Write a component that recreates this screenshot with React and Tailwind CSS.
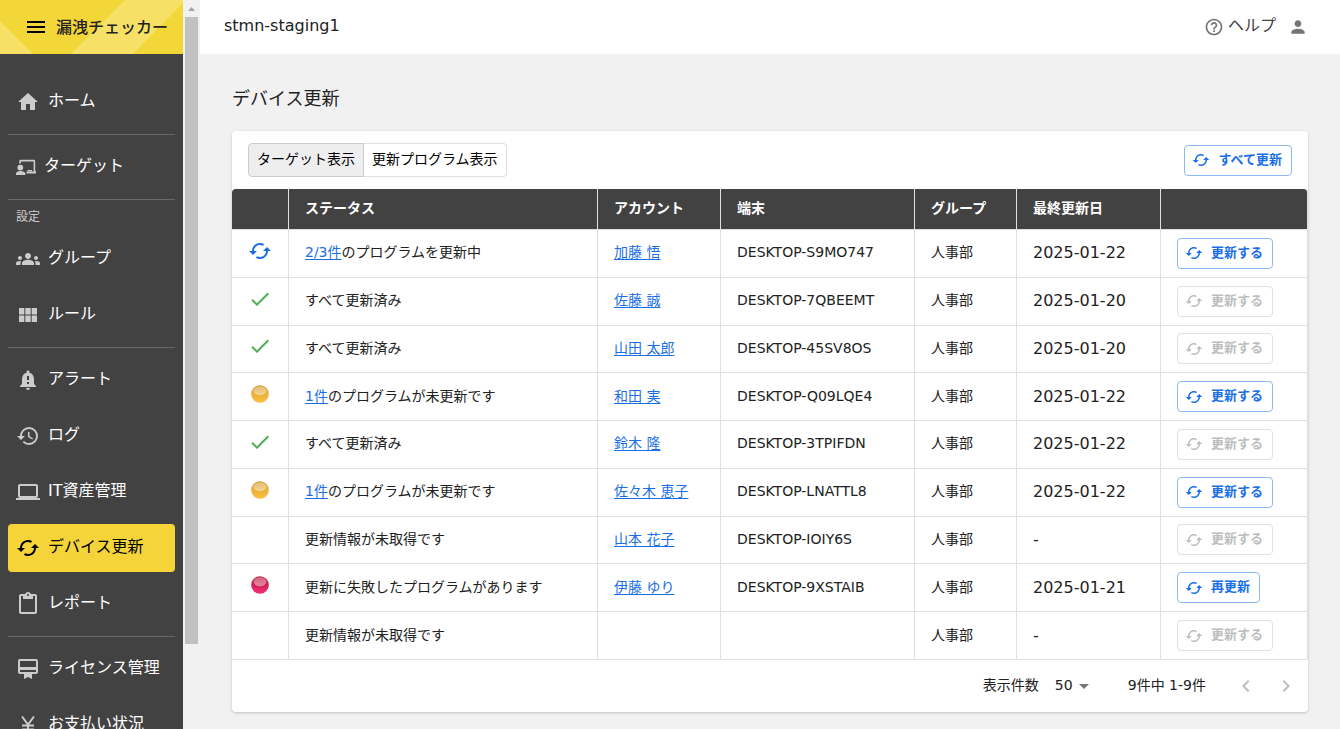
import React from "react";
import {
  MdHome, MdGroups, MdViewModule, MdNotificationImportant, MdHistory,
  MdLaptop, MdCached, MdContentPaste, MdCardMembership, MdHelpOutline,
  MdPerson, MdChevronLeft, MdChevronRight, MdArrowDropDown, MdMenu, MdCheck,
} from "react-icons/md";

function TargetIcon() {
  return (
    <svg viewBox="0 0 20 20" className="size-5 shrink-0" fill="currentColor" aria-hidden="true">
      <path d="M4.500 2.800h13.300A1.400 1.400 0 0 1 19.200 4.200V14.200H20V16.500H10.500V14.400H17.600V4.500H4.900V6.600H3.200V4.200A1.400 1.400 0 0 1 4.500 2.800z" />
      <circle cx="4.300" cy="10.600" r="2.900" />
      <path d="M0 18v-1.600C0 14.900 2 14 4.500 14S9.300 14.900 9.300 16.400V18z" />
      <path d="M11.500 13h4.500v1.500h-4.500z" />
    </svg>
  );
}

function YenIcon() {
  return (
    <svg viewBox="0 0 24 24" className="size-6 shrink-0" fill="none" stroke="currentColor" strokeWidth="2" aria-hidden="true">
      <path d="M6 3.500l6 8 6-8M12 11.500V22M6 12.500h12M6 16.500h12" />
    </svg>
  );
}

function NavItem({ icon, label, active }) {
  return (
    <a
      href="#"
      aria-current={active ? "page" : undefined}
      className={
        active
          ? "flex h-12 shrink-0 items-center gap-2 rounded bg-[#f5d43a] px-2 text-black"
          : "flex h-12 shrink-0 items-center gap-2 rounded px-2 text-[#cccccc]"
      }
    >
      {icon}
      <span className={active ? "pb-[2px] whitespace-nowrap text-black" : "pb-[2px] whitespace-nowrap text-white"}>{label}</span>
    </a>
  );
}

const Divider = () => <hr className="border-0 border-t border-[#686868]" />;
const ic = "size-6 shrink-0";

function Sidebar() {
  return (
    <aside className="flex w-[183px] shrink-0 flex-col overflow-hidden bg-[#424242]">
      <div className="relative h-[54px] shrink-0 bg-[#f3d638]">
        <svg className="absolute inset-0 size-full" viewBox="0 0 183 54" preserveAspectRatio="none" fill="#f6e065" aria-hidden="true">
          <path d="M0 21l33 33H0zM125 0h58v3l-50 51H71z" />
        </svg>
        <div className="relative flex h-full items-center gap-2 pl-6">
          <button aria-label="メニュー" className="text-black"><MdMenu className="size-6" /></button>
          <span className="pt-[2px] font-medium whitespace-nowrap text-[#222222]">漏洩チェッカー</span>
        </div>
      </div>
      <nav className="flex flex-col gap-2 px-2 pt-6">
        <NavItem icon={<MdHome className={ic} />} label="ホーム" />
        <Divider />
        <NavItem icon={<TargetIcon />} label="ターゲット" />
        <Divider />
        <div className="h-[19px] px-2 text-xs leading-[18px] text-[#cccccc]">設定</div>
        <NavItem icon={<MdGroups className={ic} />} label="グループ" />
        <NavItem icon={<MdViewModule className={ic} />} label="ルール" />
        <Divider />
        <NavItem icon={<MdNotificationImportant className={ic} />} label="アラート" />
        <NavItem icon={<MdHistory className={ic} />} label="ログ" />
        <NavItem icon={<MdLaptop className={ic} />} label="IT資産管理" />
        <NavItem icon={<MdCached className={ic} />} label="デバイス更新" active />
        <NavItem icon={<MdContentPaste className={ic} />} label="レポート" />
        <Divider />
        <NavItem icon={<MdCardMembership className={ic} />} label="ライセンス管理" />
        <NavItem icon={<YenIcon />} label="お支払い状況" />
      </nav>
    </aside>
  );
}

function ScrollTrack() {
  return (
    <div className="flex w-[17px] shrink-0 flex-col items-center bg-[#f1f1f1]" aria-hidden="true">
      <svg viewBox="0 0 17 17" className="size-[17px] shrink-0" fill="#a3a3a3"><path d="M5 11l3.500-4 3.500 4z" /></svg>
      <div className="h-[86%] w-[13px] bg-[#c1c1c1]" />
    </div>
  );
}

function ActionButton({ children, disabled }) {
  return (
    <button
      disabled={disabled}
      className={
        disabled
          ? "flex h-[31px] items-center gap-2 rounded border border-[#e0e0e0] pr-[9px] pl-[7px] text-[13px] font-bold text-[#bdbdbd]"
          : "flex h-[31px] items-center gap-2 rounded border border-[#8cb8f3] pr-[9px] pl-[7px] text-[13px] font-bold text-[#1a6fe8]"
      }
    >
      <MdCached className="size-[18px] shrink-0" />
      <span className="pb-px leading-5 whitespace-nowrap">{children}</span>
    </button>
  );
}

function Ball({ tone }) {
  const red = tone === "red";
  return (
    <svg viewBox="0 0 24 24" className="size-6" aria-hidden="true">
      <defs>
        <linearGradient id={"base-" + tone} x1="0" y1="0" x2="0" y2="1">
          <stop offset="0" stopColor={red ? "#b92340" : "#d79a35"} />
          <stop offset="0.5" stopColor={red ? "#cf2050" : "#e8b03a"} />
          <stop offset="1" stopColor={red ? "#f83080" : "#ffbf42"} />
        </linearGradient>
        <linearGradient id={"shine-" + tone} x1="0" y1="0" x2="0" y2="1">
          <stop offset="0" stopColor="#fff" stopOpacity="0.3" />
          <stop offset="1" stopColor="#fff" stopOpacity="0.45" />
        </linearGradient>
      </defs>
      <circle cx="12" cy="12" r="8.800" fill={"url(#base-" + tone + ")"} />
      <ellipse cx="12" cy="8.700" rx="6.400" ry="4.500" fill={"url(#shine-" + tone + ")"} />
    </svg>
  );
}

function StatusIcon({ kind }) {
  if (kind === "sync") return <MdCached className="size-6 text-[#1a6fe8]" aria-label="更新中" />;
  if (kind === "ok") return <MdCheck className="size-6 text-[#4caf50]" aria-label="更新済み" />;
  if (kind === "warn") return <Ball tone="amber" />;
  if (kind === "error") return <Ball tone="red" />;
  return null;
}

const rows = [
  { kind: "sync", link: "2/3件", text: "のプログラムを更新中", user: "加藤 悟", pc: "DESKTOP-S9MO747", date: "2025-01-22", action: "更新する" },
  { kind: "ok", text: "すべて更新済み", user: "佐藤 誠", pc: "DESKTOP-7QBEEMT", date: "2025-01-20", action: "更新する", off: true },
  { kind: "ok", text: "すべて更新済み", user: "山田 太郎", pc: "DESKTOP-45SV8OS", date: "2025-01-20", action: "更新する", off: true },
  { kind: "warn", link: "1件", text: "のプログラムが未更新です", user: "和田 実", pc: "DESKTOP-Q09LQE4", date: "2025-01-22", action: "更新する" },
  { kind: "ok", text: "すべて更新済み", user: "鈴木 隆", pc: "DESKTOP-3TPIFDN", date: "2025-01-22", action: "更新する", off: true },
  { kind: "warn", link: "1件", text: "のプログラムが未更新です", user: "佐々木 恵子", pc: "DESKTOP-LNATTL8", date: "2025-01-22", action: "更新する" },
  { kind: "", text: "更新情報が未取得です", user: "山本 花子", pc: "DESKTOP-IOIY6S", date: "-", action: "更新する", off: true },
  { kind: "error", text: "更新に失敗したプログラムがあります", user: "伊藤 ゆり", pc: "DESKTOP-9XSTAIB", date: "2025-01-21", action: "再更新" },
  { kind: "", text: "更新情報が未取得です", user: "", pc: "", date: "-", action: "更新する", off: true },
];

const th = "border-r border-b border-[#e0e0e0] px-4 pb-[2px] text-left font-bold";
const td = "border-r border-b border-[#e0e0e0] px-4 pt-0 pb-[2px]";
const link = "text-[#1a6fe8] underline underline-offset-2";

function DeviceTable() {
  return (
    <table className="h-[471px] w-full table-fixed border-separate border-spacing-0 text-sm leading-5 text-[#212121]">
      <colgroup>
        <col className="w-[57px]" />
        <col className="w-[309px]" />
        <col className="w-[123px]" />
        <col className="w-[194px]" />
        <col className="w-[102px]" />
        <col className="w-[144px]" />
        <col className="w-[147px]" />
      </colgroup>
      <thead className="text-white">
        <tr className="h-[41px]">
          <th className={th + " rounded-tl-sm bg-[#424242]"}></th>
          <th className={th + " bg-[#424242]"}>ステータス</th>
          <th className={th + " bg-[#424242]"}>アカウント</th>
          <th className={th + " bg-[#424242]"}>端末</th>
          <th className={th + " bg-[#424242]"}>グループ</th>
          <th className={th + " bg-[#424242]"}>最終更新日</th>
          <th className={th + " rounded-tr-sm bg-[#424242]"}></th>
        </tr>
      </thead>
      <tbody>
        {rows.map((r) => (
          <tr key={r.pc + r.text}>
            <td className="border-r border-b border-[#e0e0e0] px-4 pt-0 pb-[5px]"><StatusIcon kind={r.kind} /></td>
            <td className={td}>
              {r.link && <a href="#" className={link}>{r.link}</a>}{r.text}
            </td>
            <td className={td}>{r.user && <a href="#" className={link}>{r.user}</a>}</td>
            <td className={td}>{r.pc}</td>
            <td className={td}>{"人事部"}</td>
            <td className="border-r border-b border-[#e0e0e0] px-4 py-0 text-base leading-5">{r.date}</td>
            <td className="border-r border-b border-[#e0e0e0] px-4 py-0"><ActionButton disabled={r.off}>{r.action}</ActionButton></td>
          </tr>
        ))}
      </tbody>
    </table>
  );
}

export default function App() {
  return (
    <div className="flex h-screen overflow-hidden bg-[#f1f1f1] font-['DejaVu_Sans','Noto_Sans_CJK_JP',sans-serif] text-base text-[#212121]">
      <Sidebar />
      <ScrollTrack />
      <div className="flex min-w-0 flex-1 flex-col">
        <header className="flex h-[54px] shrink-0 items-center justify-between bg-white pr-8 pl-6">
          <span className="pb-[2px]">stmn-staging1</span>
          <div className="flex items-center gap-3 text-[#757575]">
            <a href="#" className="flex items-center gap-1">
              <MdHelpOutline className="size-5" />
              <span className="pb-[2px] text-[#424242]">ヘルプ</span>
            </a>
            <button aria-label="アカウント"><MdPerson className="size-5" /></button>
          </div>
        </header>
        <main className="flex flex-col px-8 pt-[31px]">
          <h1 className="mb-[19px] text-lg leading-[27px]">デバイス更新</h1>
          <section className="rounded bg-white shadow-[0_1px_3px_rgba(0,0,0,0.2)]">
            <div className="flex h-[58px] items-center justify-between px-4">
              <div className="flex h-[34px] text-sm text-black">
                <button aria-pressed="true" className="rounded-l border border-[#cccccc] bg-[#eeeeee] px-2 pb-[2px]">ターゲット表示</button>
                <button aria-pressed="false" className="rounded-r border border-l-0 border-[#e0e0e0] px-2 pb-[2px]">更新プログラム表示</button>
              </div>
              <ActionButton>すべて更新</ActionButton>
            </div>
            <DeviceTable />
            <div className="flex h-[52px] items-center justify-end pr-[2px] text-sm">
              <label htmlFor="page-size" className="pb-[2px]">表示件数</label>
              <div className="relative mr-8 ml-2 flex items-center">
                <select id="page-size" defaultValue="50" className="h-6 w-[49px] appearance-none bg-transparent pb-[2px] pl-2 leading-5">
                  <option>50</option>
                  <option>100</option>
                </select>
                <MdArrowDropDown className="pointer-events-none absolute right-0 size-6 text-[#757575]" />
              </div>
              <span className="mr-5 pb-[2px]">9件中 1-9件</span>
              <button aria-label="前のページ" disabled className="flex size-10 items-center justify-center text-[#bdbdbd]"><MdChevronLeft className="size-6" /></button>
              <button aria-label="次のページ" disabled className="flex size-10 items-center justify-center text-[#bdbdbd]"><MdChevronRight className="size-6" /></button>
            </div>
          </section>
        </main>
      </div>
    </div>
  );
}
